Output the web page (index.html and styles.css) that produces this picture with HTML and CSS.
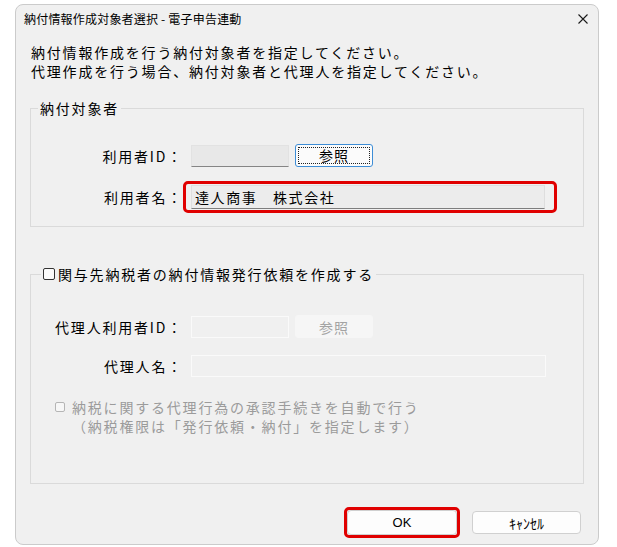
FILE: index.html
```html
<!DOCTYPE html>
<html lang="ja">
<head>
<meta charset="utf-8">
<title>納付情報作成対象者選択 - 電子申告連動</title>
<link rel="stylesheet" href="styles.css">
</head>
<body>
<div class="window">
  <div class="titlebar">
    <span class="title">納付情報作成対象者選択 - 電子申告連動</span>
    <svg class="close" viewBox="0 0 10 10" width="10" height="10"><path d="M0.5 0.5 L9.5 9.5 M9.5 0.5 L0.5 9.5" stroke="#1a1a1a" stroke-width="1.1" fill="none"/></svg>
  </div>
  <div class="message">
    <p>納付情報作成を行う納付対象者を指定してください。</p>
    <p>代理作成を行う場合、納付対象者と代理人を指定してください。</p>
  </div>

  <fieldset class="group group-payer">
    <legend class="legend-payer">納付対象者</legend>
    <div class="rows rows-payer">
      <div class="label">利用者ID：</div>
      <div class="field">
        <span class="input input-id"></span>
        <button class="btn btn-ref btn-focus" type="button"><span class="focus-ring">参照</span></button>
      </div>
      <div class="label">利用者名：</div>
      <div class="field">
        <div class="highlight"><span class="input input-name">達人商事　株式会社</span></div>
      </div>
    </div>
  </fieldset>

  <fieldset class="group group-agent">
    <legend class="legend-agent"><span class="cb"></span>関与先納税者の納付情報発行依頼を作成する</legend>
    <div class="rows rows-agent">
      <div class="label">代理人利用者ID：</div>
      <div class="field">
        <span class="input input-disabled input-id-dis"></span>
        <button class="btn btn-ref btn-disabled" type="button" disabled>参照</button>
      </div>
      <div class="label">代理人名：</div>
      <div class="field">
        <span class="input input-disabled input-name-dis"></span>
      </div>
    </div>
    <div class="auto">
      <span class="cb cb-disabled"></span>
      <div class="auto-text">
        <p>納税に関する代理行為の承認手続きを自動で行う</p>
        <p>（納税権限は「発行依頼・納付」を指定します）</p>
      </div>
    </div>
  </fieldset>

  <div class="footer">
    <div class="ok-wrap"><button class="btn btn-ok" type="button">OK</button></div>
    <button class="btn btn-cancel" type="button">ｷｬﾝｾﾙ</button>
  </div>
</div>
</body>
</html>
```

FILE: styles.css
```css
body {
  margin: 0;
  background: #ffffff;
  font-family: "Noto Sans CJK JP", "Noto Sans", sans-serif;
  color: #000;
}

.window {
  box-sizing: border-box;
  width: 584px;
  height: 541px;
  margin: 4px 0 0 15px;
  border: 1px solid #cbcbcb;
  border-radius: 8px;
  background: #f0f0f0;
  display: flex;
  flex-direction: column;
}

.titlebar {
  height: 28px;
  display: flex;
  align-items: center;
  padding: 0 10px 0 8px;
}

.title {
  flex: 1;
  font-size: 12px;
  letter-spacing: 0.2px;
  line-height: 16px;
}

.close {
  display: block;
  width: 10px;
  height: 10px;
}

.message {
  margin: 10px 0 0 15px;
  font-size: 14px;
  letter-spacing: 1.8px;
  line-height: 19px;
}

.message p,
.auto-text p {
  margin: 0;
}

.group {
  margin: 17px 14px 0;
  padding: 0;
  border: 1px solid #dadada;
  min-width: 0;
}

.group-agent {
  margin-top: 37px;
}

.group legend {
  padding: 0 2px;
  font-size: 14px;
  letter-spacing: 1.8px;
  line-height: 20px;
}

.legend-payer {
  margin-left: 7px;
}

.legend-agent {
  margin-left: 10px;
  display: flex;
  align-items: center;
}

.cb {
  box-sizing: border-box;
  display: inline-block;
  width: 12px;
  height: 12px;
  border: 1px solid #333;
  border-radius: 2px;
  background: #fbfbfb;
  margin-right: 3px;
}

.rows {
  display: grid;
  grid-template-columns: 152px 1fr;
  align-items: center;
}

.rows-payer {
  margin-top: 26px;
  row-gap: 14px;
  padding-bottom: 13px;
}

.rows-agent {
  margin-top: 31px;
  row-gap: 17px;
}

.label {
  text-align: right;
  font-size: 14px;
  letter-spacing: 1.8px;
  line-height: 20px;
}

.field {
  display: flex;
  align-items: center;
}

.input {
  box-sizing: border-box;
  display: block;
  height: 22px;
}

.input-id {
  margin-left: 8px;
  width: 98px;
  background: #e8e8e8;
  border: 1px solid #e2e2e2;
  border-bottom-color: #858585;
}

.highlight {
  box-sizing: border-box;
  width: 374px;
  border: 3px solid #e00000;
  border-radius: 5px;
  padding: 1px 9px 1px 5px;
}

.input-name {
  width: 354px;
  height: 24px;
  background: #ececec;
  border: 1px solid #dedede;
  border-bottom-color: #7d7d7d;
  padding-left: 3px;
  font-size: 14px;
  letter-spacing: 1.6px;
  line-height: 22px;
}

.input-disabled {
  background: #f0f0f0;
  border: 1px solid #fafafa;
}

.input-id-dis {
  margin-left: 8px;
  width: 98px;
}

.input-name-dis {
  margin-left: 8px;
  width: 355px;
}

.btn {
  box-sizing: border-box;
  font-family: "Noto Sans CJK JP", "Noto Sans", sans-serif;
  font-weight: 400;
  color: #000;
  background: #fdfdfd;
  border: 1px solid #d0d0d0;
  border-radius: 4px;
  padding: 0;
  margin: 0;
}

.btn-ref {
  margin-left: 6px;
  width: 78px;
  height: 23px;
  font-size: 14px;
  letter-spacing: 1px;
}

.btn-focus {
  border: 1px solid #3d8dd6;
  border-radius: 3px;
  background: #fbfbfb;
  padding: 2px;
}

.focus-ring {
  box-sizing: border-box;
  display: flex;
  align-items: center;
  justify-content: center;
  height: 100%;
  border: 1px dotted #222;
  line-height: 15px;
}

.btn-disabled {
  background: #f6f6f6;
  border-color: #f6f6f6;
  color: #a3a3a3;
  border-radius: 3px;
}

.auto {
  display: flex;
  align-items: flex-start;
  margin: 21px 0 0 24px;
  padding-bottom: 47px;
  color: #9b9b9b;
  font-size: 14px;
  letter-spacing: 1.8px;
  line-height: 19px;
}

.cb-disabled {
  width: 10px;
  height: 10px;
  border-color: #b5b5b5;
  background: #f7f7f7;
  margin: 4px 7px 0 0;
}

.footer {
  display: flex;
  justify-content: flex-end;
  align-items: center;
  gap: 12px;
  margin-top: 23px;
  padding-right: 17px;
}

.ok-wrap {
  border: 3px solid #e00000;
  border-radius: 5px;
  display: flex;
}

.btn-ok {
  width: 110px;
  height: 25px;
  font-size: 13px;
  font-family: "Liberation Sans Narrow", "Liberation Sans", sans-serif;
}

.btn-cancel {
  width: 109px;
  height: 23px;
  font-size: 14px;
}
```
